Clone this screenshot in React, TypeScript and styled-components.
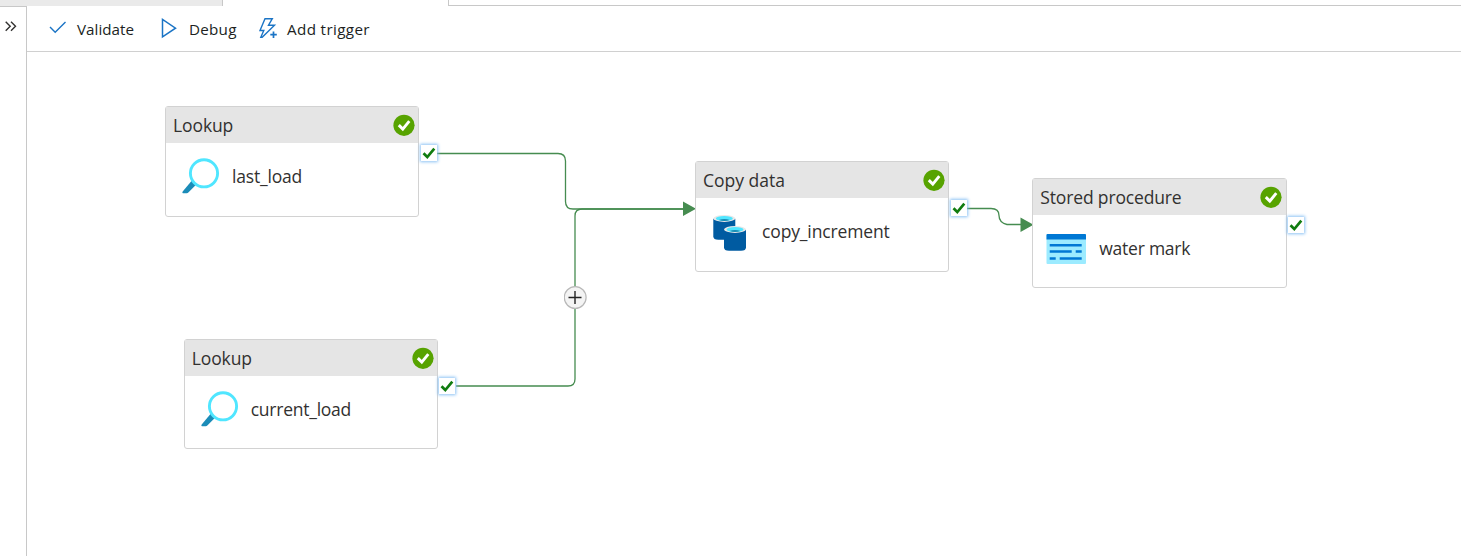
import React from 'react';
import styled, { createGlobalStyle } from 'styled-components';

const GlobalStyle = createGlobalStyle`
  * { box-sizing: border-box; }
  body { margin: 0; background: #fff; overflow: hidden; }
`;

const Page = styled.div`
  display: flex;
  flex-direction: column;
  width: 100%;
  height: 100vh;
  overflow: hidden;
  background: #fff;
  color: #323130;
  font-family: 'Segoe UI', 'Open Sans', 'Noto Sans', sans-serif;
`;

const TabStrip = styled.div`
  display: flex;
  flex: none;
  height: 6px;
`;

const InactiveTab = styled.div`
  width: 223px;
  background: #eaeaea;
  border-right: 1px solid #c8c8c8;
`;

const ActiveTab = styled.div`
  width: 225px;
`;

const TabFiller = styled.div`
  flex: 1;
  border-left: 1px solid #c8c8c8;
  border-bottom: 1px solid #c8c8c8;
`;

const Workspace = styled.div`
  display: flex;
  flex: 1;
  min-height: 0;
`;

const Rail = styled.div`
  flex: none;
  width: 27px;
  padding: 14px 0 0 4px;
  border-top: 1px solid #c8c8c8;
  border-right: 1px solid #c8c8c8;
  line-height: 0;
`;

const Editor = styled.div`
  display: flex;
  flex: 1;
  flex-direction: column;
  min-width: 0;
`;

const Toolbar = styled.div`
  display: flex;
  flex: none;
  height: 46px;
  padding-left: 21px;
  border-bottom: 1px solid #d0d0d0;
`;

const Command = styled.div<{ $width: number }>`
  display: flex;
  align-items: center;
  gap: 9px;
  width: ${(p) => p.$width}px;
  color: #201f1e;
  font-size: 15.2px;
  white-space: nowrap;
  svg { flex: none; }
`;

const Text = styled.span<{ $spacing: number }>`
  letter-spacing: ${(p) => p.$spacing}px;
`;

const Canvas = styled.div`
  position: relative;
  flex: 1;
  min-height: 0;
`;

const Links = styled.svg`
  position: absolute;
  left: 0;
  top: 0;
  overflow: visible;
`;

const Activity = styled.div<{ $x: number; $y: number }>`
  position: absolute;
  left: ${(p) => p.$x}px;
  top: ${(p) => p.$y}px;
  display: flex;
  flex-direction: column;
  width: 254.4px;
  height: 110.6px;
  border: 1px solid #d2d2d2;
  border-radius: 3px;
  background: #fff;
  font-size: 17.5px;
`;

const ActivityHeader = styled.div`
  display: flex;
  flex: none;
  align-items: center;
  justify-content: space-between;
  height: 36px;
  padding: 0 3.4px 0 7px;
  background: #e5e5e5;
  white-space: nowrap;
`;

const ActivityBody = styled.div`
  display: flex;
  flex: 1;
  align-items: center;
  gap: 6px;
  padding: 0 0 6.4px 13px;
  white-space: nowrap;
  svg { flex: none; }
`;

const Port = styled.div`
  position: absolute;
  left: 254.6px;
  top: 38.4px;
  display: flex;
  align-items: center;
  justify-content: center;
  width: 16px;
  height: 16px;
  background: #fff;
  box-shadow: 0 0 3px 1px #8cc2f4;
`;

const AddButton = styled.div`
  position: absolute;
  left: 536.5px;
  top: 233.5px;
  width: 23px;
  height: 23px;
  line-height: 0;
`;

const StatusIcon = () => (
  <svg width="22" height="22" viewBox="0 0 22 22">
    <circle cx="11" cy="11.300" r="10.6" fill="#57a300" />
    <path d="M5.800 11.100l4 4 6.500-8" fill="none" stroke="#fff" strokeWidth="2.900" />
  </svg>
);

const LookupIcon = () => (
  <svg width="47" height="44" viewBox="0 0 47 44">
    <path d="M13.300 26l4.800 3.800-8.800 8.800q-.6.600-1.500.6H3.900q-1.200-.3-.2-1.700z" fill="#1b8cb8" />
    <circle cx="25" cy="19.300" r="13.600" fill="#fff" stroke="#50e6ff" strokeWidth="2.900" />
  </svg>
);

const Cylinder = () => (
  <>
    <path d="M0 4v17.500Q0 25 5 25h12q5 0 5-3.500V4z" fill="#005ba1" />
    <ellipse cx="11" cy="3.700" rx="11" ry="3.500" fill="#e8e8e8" />
    <ellipse cx="11" cy="3.800" rx="8.500" ry="2.500" fill="#50e6ff" />
    <path d="M5.500 5.200q5.500-1.600 11 0-5.500 2-11 0z" fill="#198ab3" />
  </>
);

const CopyIcon = () => (
  <svg width="47" height="44" viewBox="0 0 47 44">
    <g transform="translate(4.300 5.700)"><Cylinder /></g>
    <g transform="translate(15 16.700)"><Cylinder /></g>
  </svg>
);

const ProcedureIcon = () => (
  <svg width="47" height="44" viewBox="0 0 47 44">
    <rect x=".5" y="8" width="39.500" height="30" rx="1" fill="#9cebff" />
    <path d="M.5 13.500V9q0-1 1-1H39q1 0 1 1v4.500z" fill="#0078d4" />
    <path d="M3.700 19.300h32M3.700 25.500h22M29.700 25.500h6M3.700 32.500h6M13.700 32.500h22" stroke="#0078d4" strokeWidth="2.500" />
  </svg>
);

const icons = { lookup: LookupIcon, copy: CopyIcon, procedure: ProcedureIcon };

type ActivityData = {
  x: number; y: number; type: string; name: string;
  icon: keyof typeof icons; typeSpacing: number; nameSpacing: number;
};

const activities: ActivityData[] = [
  { x: 138, y: 54, type: 'Lookup', name: 'last_load', icon: 'lookup', typeSpacing: -0.1, nameSpacing: -0.18 },
  { x: 156.7, y: 286.7, type: 'Lookup', name: 'current_load', icon: 'lookup', typeSpacing: -0.1, nameSpacing: -0.24 },
  { x: 668, y: 109, type: 'Copy data', name: 'copy_increment', icon: 'copy', typeSpacing: 0, nameSpacing: -0.14 },
  { x: 1005.3, y: 125.7, type: 'Stored procedure', name: 'water mark', icon: 'procedure', typeSpacing: -0.15, nameSpacing: -0.24 },
];

const ActivityNode = ({ x, y, type, name, icon, typeSpacing, nameSpacing }: ActivityData) => {
  const Icon = icons[icon];
  return (
    <Activity $x={x} $y={y}>
      <ActivityHeader>
        <Text $spacing={typeSpacing}>{type}</Text>
        <StatusIcon />
      </ActivityHeader>
      <ActivityBody>
        <Icon />
        <Text $spacing={nameSpacing}>{name}</Text>
      </ActivityBody>
      <Port>
        <svg width="14" height="14" viewBox="0 0 14 14">
          <path d="M1.500 7.200L5.300 11l7-8.300" fill="none" stroke="#107c10" strokeWidth="2.700" />
        </svg>
      </Port>
    </Activity>
  );
};

export default function App() {
  return (
    <Page>
      <GlobalStyle />
      <TabStrip><InactiveTab /><ActiveTab /><TabFiller /></TabStrip>
      <Workspace>
        <Rail>
          <svg width="13" height="11" viewBox="0 0 13 11" fill="none" stroke="#323130" strokeWidth="1.400">
            <path d="M1.700.7l4.500 4.500-4.500 4.500M7 .7l4.500 4.500-4.500 4.500" />
          </svg>
        </Rail>
        <Editor>
          <Toolbar>
            <Command $width={112}>
              <svg width="20" height="24" viewBox="0 0 20 24" fill="none" stroke="#1b74c5" strokeWidth="1.400">
                <path d="M2 10l5.200 5.300L17.500 5" />
              </svg>
              <Text $spacing={0.02}>Validate</Text>
            </Command>
            <Command $width={98}>
              <svg width="20" height="24" viewBox="0 0 20 24" fill="none" stroke="#1b74c5" strokeWidth="1.500">
                <path d="M2.500 2.500v17.300l13-8.600z" />
              </svg>
              <Text $spacing={0.25}>Debug</Text>
            </Command>
            <Command $width={120}>
              <svg width="20" height="24" viewBox="0 0 20 24" fill="none" stroke="#1b74c5" strokeWidth="1.400">
                <path d="M7 1.700h7.300L10.500 8.200h6L4.200 20.300h-1.400L5.800 13.500H2z" />
                <path d="M15.500 14.500v6.500M12.300 17.700h6.500" strokeWidth="1.700" />
              </svg>
              <Text $spacing={0.37}>Add trigger</Text>
            </Command>
          </Toolbar>
          <Canvas>
            <Links width="1434" height="504" fill="none" stroke="#468c50" strokeWidth="1.300">
              <path d="M410 101.500h121q7.500 0 7.500 7.500v40.500q0 7.500 7.500 7.500h111" />
              <path d="M429 334h112q7 0 7-7V164q0-7 7-7h102" />
              <path d="M940 156.500h24q8 0 8 7t8 9h14" />
              <path d="M656 149.500l13 7.200-13 7.200zM993.500 165.500l13 7.200-13 7.200z" fill="#468c50" stroke="none" />
            </Links>
            {activities.map((a) => <ActivityNode key={a.name} {...a} />)}
            <AddButton>
              <svg width="23" height="23" viewBox="0 0 23 23">
                <circle cx="11.200" cy="11.500" r="10.900" fill="#f4f4f4" stroke="#b8b8b8" strokeWidth="1.200" />
                <path d="M11 5v13M4.500 11.500h13" stroke="#222" strokeWidth="1.400" />
              </svg>
            </AddButton>
          </Canvas>
        </Editor>
      </Workspace>
    </Page>
  );
}
